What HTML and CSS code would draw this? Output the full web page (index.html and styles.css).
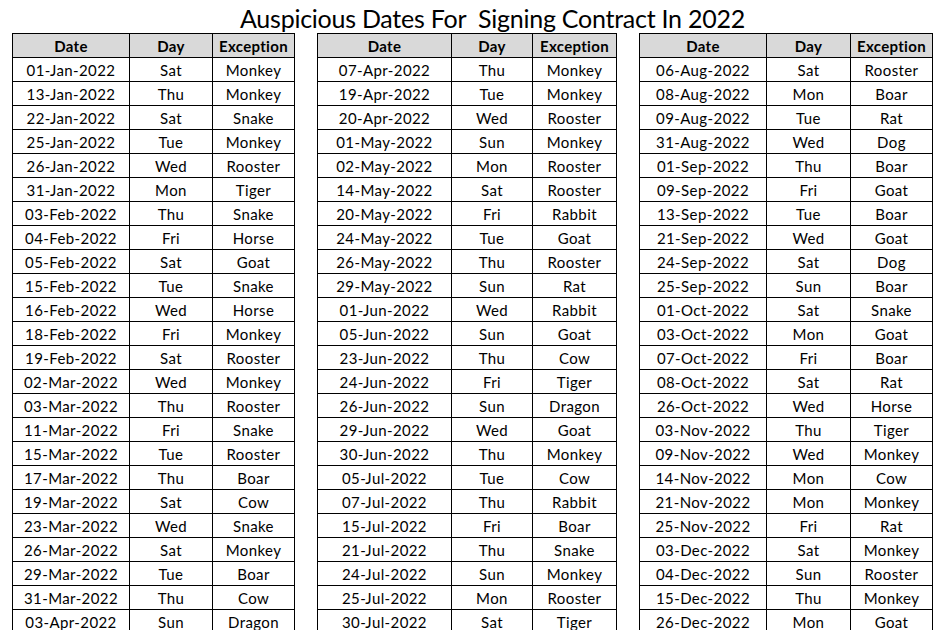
FILE: index.html
```html
<!DOCTYPE html>
<html lang="en">
<head>
<meta charset="utf-8">
<title>Auspicious Dates For Signing Contract In 2022</title>
<link rel="stylesheet" href="styles.css">
</head>
<body>
<div class="sheet">
  <h1 class="title">Auspicious Dates For&nbsp; Signing Contract In 2022</h1>
  <div class="tables">
    <table class="dates t1">
      <colgroup><col class="c-date"><col class="c-day"><col class="c-exc"></colgroup>
      <thead><tr><th>Date</th><th>Day</th><th>Exception</th></tr></thead>
      <tbody>
        <tr><td>01-Jan-2022</td><td>Sat</td><td>Monkey</td></tr>
        <tr><td>13-Jan-2022</td><td>Thu</td><td>Monkey</td></tr>
        <tr><td>22-Jan-2022</td><td>Sat</td><td>Snake</td></tr>
        <tr><td>25-Jan-2022</td><td>Tue</td><td>Monkey</td></tr>
        <tr><td>26-Jan-2022</td><td>Wed</td><td>Rooster</td></tr>
        <tr><td>31-Jan-2022</td><td>Mon</td><td>Tiger</td></tr>
        <tr><td>03-Feb-2022</td><td>Thu</td><td>Snake</td></tr>
        <tr><td>04-Feb-2022</td><td>Fri</td><td>Horse</td></tr>
        <tr><td>05-Feb-2022</td><td>Sat</td><td>Goat</td></tr>
        <tr><td>15-Feb-2022</td><td>Tue</td><td>Snake</td></tr>
        <tr><td>16-Feb-2022</td><td>Wed</td><td>Horse</td></tr>
        <tr><td>18-Feb-2022</td><td>Fri</td><td>Monkey</td></tr>
        <tr><td>19-Feb-2022</td><td>Sat</td><td>Rooster</td></tr>
        <tr><td>02-Mar-2022</td><td>Wed</td><td>Monkey</td></tr>
        <tr><td>03-Mar-2022</td><td>Thu</td><td>Rooster</td></tr>
        <tr><td>11-Mar-2022</td><td>Fri</td><td>Snake</td></tr>
        <tr><td>15-Mar-2022</td><td>Tue</td><td>Rooster</td></tr>
        <tr><td>17-Mar-2022</td><td>Thu</td><td>Boar</td></tr>
        <tr><td>19-Mar-2022</td><td>Sat</td><td>Cow</td></tr>
        <tr><td>23-Mar-2022</td><td>Wed</td><td>Snake</td></tr>
        <tr><td>26-Mar-2022</td><td>Sat</td><td>Monkey</td></tr>
        <tr><td>29-Mar-2022</td><td>Tue</td><td>Boar</td></tr>
        <tr><td>31-Mar-2022</td><td>Thu</td><td>Cow</td></tr>
        <tr><td>03-Apr-2022</td><td>Sun</td><td>Dragon</td></tr>
      </tbody>
    </table>
    <table class="dates t2">
      <colgroup><col class="c-date"><col class="c-day"><col class="c-exc"></colgroup>
      <thead><tr><th>Date</th><th>Day</th><th>Exception</th></tr></thead>
      <tbody>
        <tr><td>07-Apr-2022</td><td>Thu</td><td>Monkey</td></tr>
        <tr><td>19-Apr-2022</td><td>Tue</td><td>Monkey</td></tr>
        <tr><td>20-Apr-2022</td><td>Wed</td><td>Rooster</td></tr>
        <tr><td>01-May-2022</td><td>Sun</td><td>Monkey</td></tr>
        <tr><td>02-May-2022</td><td>Mon</td><td>Rooster</td></tr>
        <tr><td>14-May-2022</td><td>Sat</td><td>Rooster</td></tr>
        <tr><td>20-May-2022</td><td>Fri</td><td>Rabbit</td></tr>
        <tr><td>24-May-2022</td><td>Tue</td><td>Goat</td></tr>
        <tr><td>26-May-2022</td><td>Thu</td><td>Rooster</td></tr>
        <tr><td>29-May-2022</td><td>Sun</td><td>Rat</td></tr>
        <tr><td>01-Jun-2022</td><td>Wed</td><td>Rabbit</td></tr>
        <tr><td>05-Jun-2022</td><td>Sun</td><td>Goat</td></tr>
        <tr><td>23-Jun-2022</td><td>Thu</td><td>Cow</td></tr>
        <tr><td>24-Jun-2022</td><td>Fri</td><td>Tiger</td></tr>
        <tr><td>26-Jun-2022</td><td>Sun</td><td>Dragon</td></tr>
        <tr><td>29-Jun-2022</td><td>Wed</td><td>Goat</td></tr>
        <tr><td>30-Jun-2022</td><td>Thu</td><td>Monkey</td></tr>
        <tr><td>05-Jul-2022</td><td>Tue</td><td>Cow</td></tr>
        <tr><td>07-Jul-2022</td><td>Thu</td><td>Rabbit</td></tr>
        <tr><td>15-Jul-2022</td><td>Fri</td><td>Boar</td></tr>
        <tr><td>21-Jul-2022</td><td>Thu</td><td>Snake</td></tr>
        <tr><td>24-Jul-2022</td><td>Sun</td><td>Monkey</td></tr>
        <tr><td>25-Jul-2022</td><td>Mon</td><td>Rooster</td></tr>
        <tr><td>30-Jul-2022</td><td>Sat</td><td>Tiger</td></tr>
      </tbody>
    </table>
    <table class="dates t3">
      <colgroup><col class="c-date"><col class="c-day"><col class="c-exc"></colgroup>
      <thead><tr><th>Date</th><th>Day</th><th>Exception</th></tr></thead>
      <tbody>
        <tr><td>06-Aug-2022</td><td>Sat</td><td>Rooster</td></tr>
        <tr><td>08-Aug-2022</td><td>Mon</td><td>Boar</td></tr>
        <tr><td>09-Aug-2022</td><td>Tue</td><td>Rat</td></tr>
        <tr><td>31-Aug-2022</td><td>Wed</td><td>Dog</td></tr>
        <tr><td>01-Sep-2022</td><td>Thu</td><td>Boar</td></tr>
        <tr><td>09-Sep-2022</td><td>Fri</td><td>Goat</td></tr>
        <tr><td>13-Sep-2022</td><td>Tue</td><td>Boar</td></tr>
        <tr><td>21-Sep-2022</td><td>Wed</td><td>Goat</td></tr>
        <tr><td>24-Sep-2022</td><td>Sat</td><td>Dog</td></tr>
        <tr><td>25-Sep-2022</td><td>Sun</td><td>Boar</td></tr>
        <tr><td>01-Oct-2022</td><td>Sat</td><td>Snake</td></tr>
        <tr><td>03-Oct-2022</td><td>Mon</td><td>Goat</td></tr>
        <tr><td>07-Oct-2022</td><td>Fri</td><td>Boar</td></tr>
        <tr><td>08-Oct-2022</td><td>Sat</td><td>Rat</td></tr>
        <tr><td>26-Oct-2022</td><td>Wed</td><td>Horse</td></tr>
        <tr><td>03-Nov-2022</td><td>Thu</td><td>Tiger</td></tr>
        <tr><td>09-Nov-2022</td><td>Wed</td><td>Monkey</td></tr>
        <tr><td>14-Nov-2022</td><td>Mon</td><td>Cow</td></tr>
        <tr><td>21-Nov-2022</td><td>Mon</td><td>Monkey</td></tr>
        <tr><td>25-Nov-2022</td><td>Fri</td><td>Rat</td></tr>
        <tr><td>03-Dec-2022</td><td>Sat</td><td>Monkey</td></tr>
        <tr><td>04-Dec-2022</td><td>Sun</td><td>Rooster</td></tr>
        <tr><td>15-Dec-2022</td><td>Thu</td><td>Monkey</td></tr>
        <tr><td>26-Dec-2022</td><td>Mon</td><td>Goat</td></tr>
      </tbody>
    </table>
  </div>
</div>
</body>
</html>
```
FILE: styles.css
```css
html, body {
  margin: 0;
  padding: 0;
  background: #ffffff;
  height: 630px;
  overflow: hidden;
}

.sheet {
  font-family: Lato, "Liberation Sans", sans-serif;
  color: #000000;
  padding-left: 12px;
}

.title {
  margin: 0;
  height: 33px;
  box-sizing: border-box;
  padding: 4px 0 0 228px;
  font-size: 25px;
  font-weight: 400;
  line-height: 28px;
  letter-spacing: -0.25px;
  white-space: pre;
}

.tables {
  display: flex;
  gap: 22px;
  align-items: flex-start;
}

.dates {
  border-collapse: collapse;
  table-layout: fixed;
  font-size: 15px;
  letter-spacing: 0.4px;
}

.dates th,
.dates td {
  border: 1px solid #000000;
  padding: 1px 0 0;
  height: 22px;
  line-height: 22px;
  text-align: center;
  white-space: nowrap;
  overflow: hidden;
}

.dates th {
  background: #d9d9d9;
  font-weight: 700;
  letter-spacing: 0.3px;
}

.t1 { width: 282px; }
.t1 .c-date { width: 117px; }
.t1 .c-day { width: 83px; }
.t1 .c-exc { width: 82px; }

.t2 { width: 299px; }
.t2 .c-date { width: 134px; }
.t2 .c-day { width: 81px; }
.t2 .c-exc { width: 84px; }

.t3 { width: 293px; }
.t3 .c-date { width: 127px; }
.t3 .c-day { width: 84px; }
.t3 .c-exc { width: 82px; }
```
